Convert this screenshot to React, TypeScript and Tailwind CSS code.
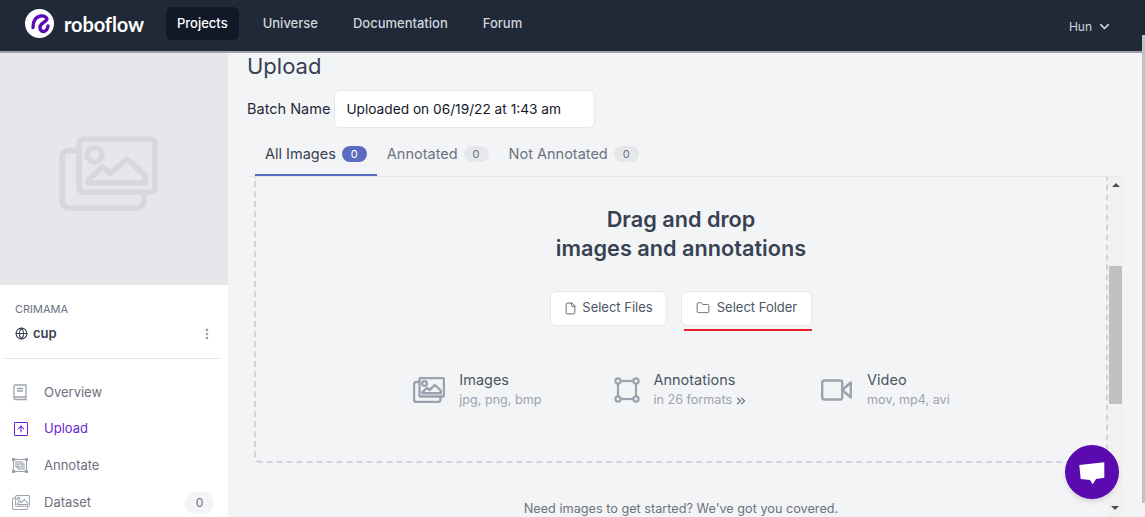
import { Globe, MoreVertical, ChevronDown, ChevronsRight, File, Folder, ArrowUp } from "lucide-react";

const font = { fontFamily: "Inter, 'Liberation Sans', sans-serif" };

const Logo = () => (
  <svg width="29" height="29" viewBox="0 0 29 29">
    <circle cx="14.5" cy="14.5" r="14.5" fill="#fff" />
    <path
      d="M8 18.5C8 13 10 8 15.5 7C19 6.5 23 8.5 21.5 11C20 13.5 15.5 14 15 18C14.8 21 17 23 19 22.5C21.5 22 22.5 19.5 23 17"
      fill="none"
      stroke="#5b0bb5"
      strokeWidth="3.4"
      strokeLinecap="round"
      strokeLinejoin="round"
    />
  </svg>
);

const PicturesIcon = ({ width, height, color, stroke = 2 }: { width: number; height: number; color: string; stroke?: number }) => (
  <svg width={width} height={height} viewBox="0 0 32 26" preserveAspectRatio="none" fill="none" stroke={color} strokeWidth={stroke} strokeLinejoin="round">
    <rect x="6.5" y="1" width="24.5" height="18.5" rx="1.5" />
    <path d="M6.5 5H3.5C2 5 1 6 1 7.5V22.5C1 24 2 25 3.5 25H25C26.5 25 27.5 24 27.5 22.5V19.5" />
    <circle cx="11.5" cy="6.5" r="2.4" />
    <path d="M9.5 16.3V15.2L14 10.8L16.5 13L22 8L27.8 13.5V16.3Z" />
  </svg>
);

const NavLink = ({ label, active }: { label: string; active?: boolean }) => (
  <a className={`px-[11px] h-[33px] flex items-center rounded-md text-[13px] font-medium ${active ? "bg-[#111827] text-white" : "text-[#d1d5db]"}`}>
    {label}
  </a>
);

const Tab = ({ label, active }: { label: string; active?: boolean }) => (
  <div className={`h-[37px] flex items-center gap-[6px] px-[10px] pb-[5px] border-b-2 text-[14.5px] ${active ? "border-[#5c6bc0] text-[#374151]" : "border-transparent text-[#6b7280]"}`}>
    {label}
    <span className={`w-[25px] h-[16px] rounded-full flex items-center justify-center text-[11px] ${active ? "bg-[#5c6bc0] text-white" : "bg-[#e5e7eb] text-[#6b7280]"}`}>0</span>
  </div>
);

const SideItem = ({ icon, label, active, badge }: { icon: React.ReactNode; label: string; active?: boolean; badge?: string }) => (
  <div className="h-[36.5px] shrink-0 flex items-center pl-[12px] pr-[14px]">
    <span className="w-[32px] flex items-center">{icon}</span>
    <span className={`text-[13px] ${active ? "text-[#6d1fd1]" : "text-[#6b7280]"}`}>{label}</span>
    {badge && (
      <span className="ml-auto w-[29px] h-[22px] rounded-full bg-[#f3f4f6] flex items-center justify-center text-[12px] text-[#6b7280]">{badge}</span>
    )}
  </div>
);

const Format = ({ icon, title, sub, gap }: { icon: React.ReactNode; title: string; sub: React.ReactNode; gap: string }) => (
  <div className={`flex items-center ${gap}`}>
    {icon}
    <div>
      <div className="text-[14.5px] leading-[20px] text-[#4b5563]">{title}</div>
      <div className="text-[12.6px] leading-[20px] text-[#9ca3af] flex items-center">{sub}</div>
    </div>
  </div>
);

export default function App() {
  return (
    <div className="relative h-[517px] w-[1145px] overflow-hidden bg-[#f3f4f6] flex flex-col" style={font}>
      <header className="h-[53px] shrink-0 bg-[#1f2937] border-b-2 border-[#9ca3af] flex items-center pl-[25px] pr-[33px] pb-[4px]">
        <Logo />
        <span className="ml-[10px] mr-[22px] text-[20px] font-bold tracking-[-0.1px] text-white" style={{ fontFamily: "Lato, sans-serif" }}>roboflow</span>
        <nav className="flex gap-[13px]">
          <NavLink label="Projects" active />
          <NavLink label="Universe" />
          <NavLink label="Documentation" />
          <NavLink label="Forum" />
        </nav>
        <div className="ml-auto flex items-center gap-[5px] text-[12px] text-[#d1d5db] pt-[6px]">
          Hun <ChevronDown size={15} strokeWidth={2.5} />
        </div>
      </header>

      <div className="flex flex-1 min-h-0">
        <aside className="w-[228px] shrink-0 bg-white flex flex-col overflow-hidden">
          <div className="h-[232px] shrink-0 bg-[#e5e7eb] flex items-center justify-center pt-[9px] pr-[11px]">
            <PicturesIcon width={99} height={75} color="#d6d8dd" stroke={1.9} />
          </div>
          <div className="shrink-0 ml-[4px] mr-[7px] pl-[11px] pr-[7px] pt-[16px] h-[74px] border-b border-[#e5e7eb]">
            <div className="text-[11px] leading-[16px] text-[#6b7280]">CRIMAMA</div>
            <div className="mt-[7px] flex items-center gap-[5px] text-[13px] font-semibold text-[#374151]">
              <Globe size={13} strokeWidth={2} />
              cup
              <MoreVertical size={14} strokeWidth={2.5} className="ml-auto text-[#9ca3af]" />
            </div>
          </div>
          <div className="shrink-0 pt-[15px]">
            <SideItem
              label="Overview"
              icon={
                <svg width="16" height="17" viewBox="0 0 16 17" fill="none" stroke="#9ca3af" strokeWidth="1.3">
                  <path d="M2 14V2C2 1.4 2.4 1 3 1H14V15.5H3.5C2.7 15.5 2 15 2 14.2C2 13.4 2.7 13 3.5 13H14" />
                  <path d="M5 4.5H11M5 7H11" />
                </svg>
              }
            />
            <SideItem
              label="Upload"
              active
              icon={
                <span className="w-[14px] h-[14px] ml-[2px] border-[1.5px] border-[#6d1fd1] rounded-[1px] flex items-center justify-center">
                  <ArrowUp size={10} strokeWidth={2.5} className="text-[#6d1fd1]" />
                </span>
              }
            />
            <SideItem
              label="Annotate"
              icon={
                <svg width="16" height="15" viewBox="0 0 16 15" fill="none" stroke="#9ca3af" strokeWidth="1.1">
                  <rect x="1.5" y="1.5" width="13" height="12" />
                  <rect x="4" y="4" width="6" height="5" />
                  <rect x="6" y="6" width="6" height="5" />
                  <rect x="0.5" y="0.5" width="2" height="2" fill="#9ca3af" />
                  <rect x="13.5" y="0.5" width="2" height="2" fill="#9ca3af" />
                  <rect x="0.5" y="12.5" width="2" height="2" fill="#9ca3af" />
                  <rect x="13.5" y="12.5" width="2" height="2" fill="#9ca3af" />
                </svg>
              }
            />
            <div className="pt-[1px]">
              <SideItem label="Dataset" badge="0" icon={<PicturesIcon width={18} height={15} color="#9ca3af" stroke={1.8} />} />
            </div>
          </div>
        </aside>

        <main className="flex-1 min-w-0 flex">
          <div className="flex-1 min-w-0 pl-[19px] pr-[15px] flex flex-col">
            <h1 className="text-[22px] leading-[28px] text-[#374151] mt-[-1px]">Upload</h1>
            <div className="mt-[10px] flex items-center gap-[4px] text-[14.5px] text-[#1f2937]">
              <span>Batch Name</span>
              <div className="w-[261px] h-[38px] bg-white border border-[#e5e7eb] rounded-md pl-[11px] flex items-center text-[13.7px] text-[#111827]">Uploaded on 06/19/22 at 1:43 am</div>
            </div>
            <div className="mt-[11px] flex pl-[8px] border-b border-[#e5e7eb] h-[38px]">
              <Tab label="All Images" active />
              <Tab label="Annotated" />
              <Tab label="Not Annotated" />
            </div>
            <div className="flex flex-1 min-h-0 pl-[7px] overflow-hidden">
              <div className="flex-1 min-w-0">
                <div className="h-[286px] border-2 border-dashed border-t-0 border-[#d1d5db] rounded-b-md flex flex-col items-center">
                  <div className="mt-[28px] text-center text-[21.7px] leading-[29px] font-semibold text-[#374151]">
                    Drag and drop
                    <br />
                    images and annotations
                  </div>
                  <div className="mt-[28px] flex gap-[14px]">
                    <button className="w-[117px] h-[35px] pb-[1px] bg-white border border-[#e5e7eb] rounded-md flex items-center justify-center gap-[5px] text-[13px] text-[#4b5563]">
                      <File size={13} strokeWidth={1.6} /> Select Files
                    </button>
                    <div>
                      <button className="w-[131px] h-[35px] pb-[1px] bg-white border border-[#e5e7eb] rounded-md flex items-center justify-center gap-[7px] text-[13px] text-[#4b5563]">
                        <Folder size={14} strokeWidth={1.4} /> Select Folder
                      </button>
                      <div className="ml-[3px] mt-[3px] h-[2px] bg-[#e8212b]" />
                    </div>
                  </div>
                  <div className="mt-[39px] pl-[1px] flex gap-[73px]">
                    <Format gap="gap-[14px]" icon={<PicturesIcon width={32} height={26} color="#9ca3af" stroke={2.4} />} title="Images" sub="jpg, png, bmp" />
                    <Format
                      gap="gap-[13px]"
                      icon={
                        <svg width="26" height="26" viewBox="0 0 26 26" fill="none" stroke="#9ca3af" strokeWidth="2.2">
                          <rect x="4" y="4" width="18" height="18" />
                          <circle cx="4" cy="4" r="2.6" fill="#f3f4f6" />
                          <circle cx="22" cy="4" r="2.6" fill="#f3f4f6" />
                          <circle cx="4" cy="22" r="2.6" fill="#f3f4f6" />
                          <circle cx="22" cy="22" r="2.6" fill="#f3f4f6" />
                        </svg>
                      }
                      title="Annotations"
                      sub={<>in 26 formats <ChevronsRight size={14} strokeWidth={2.2} className="ml-[2px] mt-[1px] text-[#6b7280]" /></>}
                    />
                    <Format
                      gap="gap-[15px]"
                      icon={
                        <svg width="31" height="22" viewBox="0 0 31 22" fill="none" stroke="#9ca3af" strokeWidth="2.4" strokeLinejoin="round">
                          <rect x="1.2" y="1.5" width="20" height="19" rx="2" />
                          <path d="M21.2 11L29.8 3.5V18.5Z" />
                        </svg>
                      }
                      title="Video"
                      sub="mov, mp4, avi"
                    />
                  </div>
                </div>
                <div className="mt-[36px] text-center text-[12.7px] text-[#6b7280]">Need images to get started? We've got you covered.</div>
              </div>
              <div className="w-[15px] shrink-0 bg-[#f1f1f1] flex flex-col items-center">
                <div className="h-[15px] flex items-center">
                  <div className="w-0 h-0 border-x-[4px] border-x-transparent border-b-[4px] border-b-[#505050]" />
                </div>
                <div className="mt-[74px] w-[13px] h-[138px] bg-[#c1c1c1]" />
              </div>
            </div>
          </div>
          <div className="w-[7px] shrink-0" />
        </main>
      </div>

      <div className="absolute left-[1142px] top-[35px] w-[3px] h-[468px] bg-[#c1c1c1]" />
      <button className="absolute left-[1065px] top-[445px] w-[54px] h-[54px] rounded-full bg-[#5a0aaf] flex items-center justify-center shadow-md">
        <svg width="26" height="25" viewBox="0 0 26 25">
          <path d="M0.3 5L25.3 2.3V17.7L17 19L13.7 24.3L11 20L1.7 19Z" fill="#fff" />
        </svg>
      </button>
      <div className="absolute left-[1111px] top-[506px] w-0 h-0 border-x-[4px] border-x-transparent border-t-[4px] border-t-[#505050]" />
    </div>
  );
}
